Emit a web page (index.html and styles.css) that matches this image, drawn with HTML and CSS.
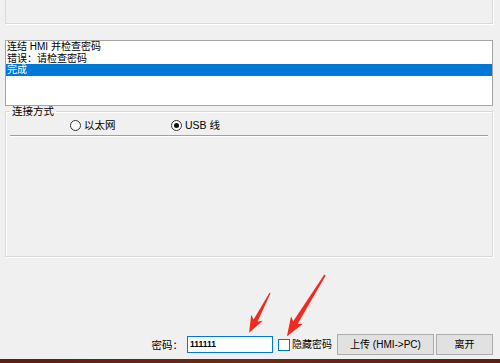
FILE: index.html
```html
<!DOCTYPE html>
<html>
<head>
  <meta charset="utf-8">
  <title>上传</title>
  <link rel="stylesheet" href="styles.css">
</head>
<body>
  <div class="window">
    <div class="top-box"></div>

    <div class="log">
      <div class="log-row">连结 HMI 并检查密码</div>
      <div class="log-row">错误：请检查密码</div>
      <div class="log-row selected">完成</div>
    </div>

    <fieldset class="group">
      <legend>连接方式</legend>
      <div class="radios">
        <label class="radio"><span class="dot"></span>以太网</label>
        <label class="radio"><span class="dot checked"></span>USB 线</label>
      </div>
      <div class="separator"></div>
    </fieldset>

    <div class="actions">
      <span class="pw-label">密码：</span>
      <div class="password">111111</div>
      <label class="check"><span class="box"></span>隐藏密码</label>
      <button class="btn upload">上传 (HMI-&gt;PC)</button>
      <button class="btn leave">离开</button>
    </div>
  </div>
  <div class="taskbar"></div>

  <!-- red annotation arrows -->
  <svg class="arrows" width="500" height="363" viewBox="0 0 500 363">
    <g transform="translate(270 293) rotate(117.7)">
      <polygon points="0,-0.6 31,-2.2 28,-6.5 45,0 28,6.5 31,2.2 0,0.6" />
    </g>
    <g transform="translate(325 275) rotate(121.9)">
      <polygon points="0,-0.8 56,-2.6 53,-7 72,0 53,7 56,2.6 0,0.8" />
    </g>
  </svg>
</body>
</html>
```

FILE: styles.css
```css
body {
  margin: 0;
  padding: 0;
  background: #f0f0f0;
  color: #000;
  font-family: "Liberation Sans", "Noto Sans CJK SC", sans-serif;
  font-size: 10.5px;
  width: 500px;
  height: 363px;
  overflow: hidden;
  position: relative;
}

.window {
  height: 359px;
  padding: 0 7px 0 5px;
  box-sizing: border-box;
  display: flex;
  flex-direction: column;
}

.top-box {
  height: 24px;
  box-sizing: border-box;
  border: 1px solid #d9d9d9;
  border-top: none;
  box-shadow: 1px 1px 0 #fff;
}

.log {
  margin-top: 16px;
  height: 66px;
  box-sizing: border-box;
  border: 1px solid #a5a5a5;
  background: #fff;
}

.log-row {
  height: 11.5px;
  line-height: 11.5px;
  font-size: 10px;
  padding-left: 1px;
  white-space: nowrap;
}

.log-row.selected {
  background: #0078d7;
  color: #fff;
}

.group {
  margin: 0;
  padding: 0 4px;
  height: 151px;
  box-sizing: border-box;
  border: 1px solid #d9d9d9;
  box-shadow: inset 1px 1px 0 #fff, 1px 1px 0 #fff;
  min-width: 0;
}

.group legend {
  padding: 0 2px;
  line-height: 11px;
}

.radios {
  display: grid;
  grid-template-columns: 101px auto;
  padding-left: 60px;
  height: 16px;
  align-items: center;
}

.radio {
  display: flex;
  align-items: center;
  gap: 3px;
  line-height: 12px;
}

.dot {
  width: 11px;
  height: 11px;
  box-sizing: border-box;
  border: 1px solid #333;
  border-radius: 50%;
  background: #fff;
  display: flex;
  align-items: center;
  justify-content: center;
}

.dot.checked::after {
  content: "";
  width: 5px;
  height: 5px;
  border-radius: 50%;
  background: #111;
}

.separator {
  margin-top: 2px;
  height: 1px;
  background: #a0a0a0;
  border-bottom: 1px solid #fff;
}

.actions {
  margin-top: auto;
  margin-bottom: 4px;
  height: 21px;
  display: flex;
  justify-content: flex-end;
  align-items: center;
}

.pw-label {
  margin-right: 4px;
  line-height: 12px;
}

.password {
  width: 86px;
  height: 17px;
  box-sizing: border-box;
  border: 1px solid #0078d7;
  background: #fff;
  font-weight: bold;
  font-size: 8.5px;
  line-height: 15px;
  padding-left: 2px;
}

.check {
  margin-left: 5px;
  display: flex;
  align-items: center;
  gap: 2px;
  font-size: 10px;
  line-height: 12px;
}

.box {
  width: 12px;
  height: 12px;
  box-sizing: border-box;
  border: 1px solid #0078d7;
  background: #fff;
}

.btn {
  height: 21px;
  box-sizing: border-box;
  border: 1px solid #adadad;
  background: #e1e1e1;
  font: inherit;
  font-size: 10px;
  line-height: 12px;
  padding: 0;
  color: #000;
}

.upload { width: 97px; margin-left: 5px; }
.leave { width: 57px; margin-left: 2px; }

.taskbar {
  height: 4px;
  background: linear-gradient(90deg, #5a1f10, #6e2a16 50%, #5a1f10);
}

.arrows {
  position: absolute;
  top: 0;
  left: 0;
  pointer-events: none;
}

.arrows polygon {
  fill: #f4281d;
}
```
